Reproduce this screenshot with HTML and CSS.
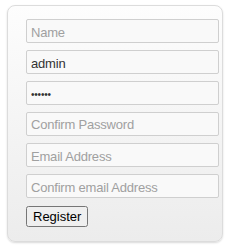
FILE: index.html
```
<html>
<head>
	<title>register</title>
	<link rel="stylesheet" href="styles.css">
</head>
<body>
	<form class="register">
		<input type="text" class="field" placeholder="Name">
		<input type="text" class="field" value="admin">
		<input type="password" class="field" value="123456">
		<input type="password" class="field" placeholder="Confirm Password">
		<input type="text" class="field" placeholder="Email Address">
		<input type="text" class="field" placeholder="Confirm email Address">
		<button type="button" class="submit">Register</button>
	</form>
</body>
</html>
```
FILE: styles.css
```
body{
	margin: 0;
	padding: 5px 0 0 7px;
	font-family: "Liberation Sans", Arial, sans-serif;
}
.register{
	display: flex;
	flex-direction: column;
	gap: 7px;
	width: 193px;
	margin: 0;
	padding: 13px 3px 14px 18px;
	border: 1px solid #dcdcdc;
	border-radius: 8px;
	background: linear-gradient(#fdfdfd, #ececec);
	box-shadow: 0 1px 2px rgba(0, 0, 0, 0.15);
}
.field{
	width: 193px;
	height: 24px;
	box-sizing: border-box;
	padding: 3px 4px 1px;
	border: 1px solid #cfcfcf;
	border-radius: 2px;
	background: #f9f9f9;
	color: #333;
	font-family: "Liberation Sans", Arial, sans-serif;
	font-size: 13px;
	letter-spacing: -0.2px;
}
.field::placeholder{
	color: #a0a0a0;
}
.field[type="password"]{
	font-size: 10px;
}
.field[type="password"]::placeholder{
	font-size: 13px;
}
.submit{
	align-self: flex-start;
	margin-top: 1px;
	font-family: "Liberation Sans", Arial, sans-serif;
	font-size: 13px;
	padding: 1px 5px;
}
```
